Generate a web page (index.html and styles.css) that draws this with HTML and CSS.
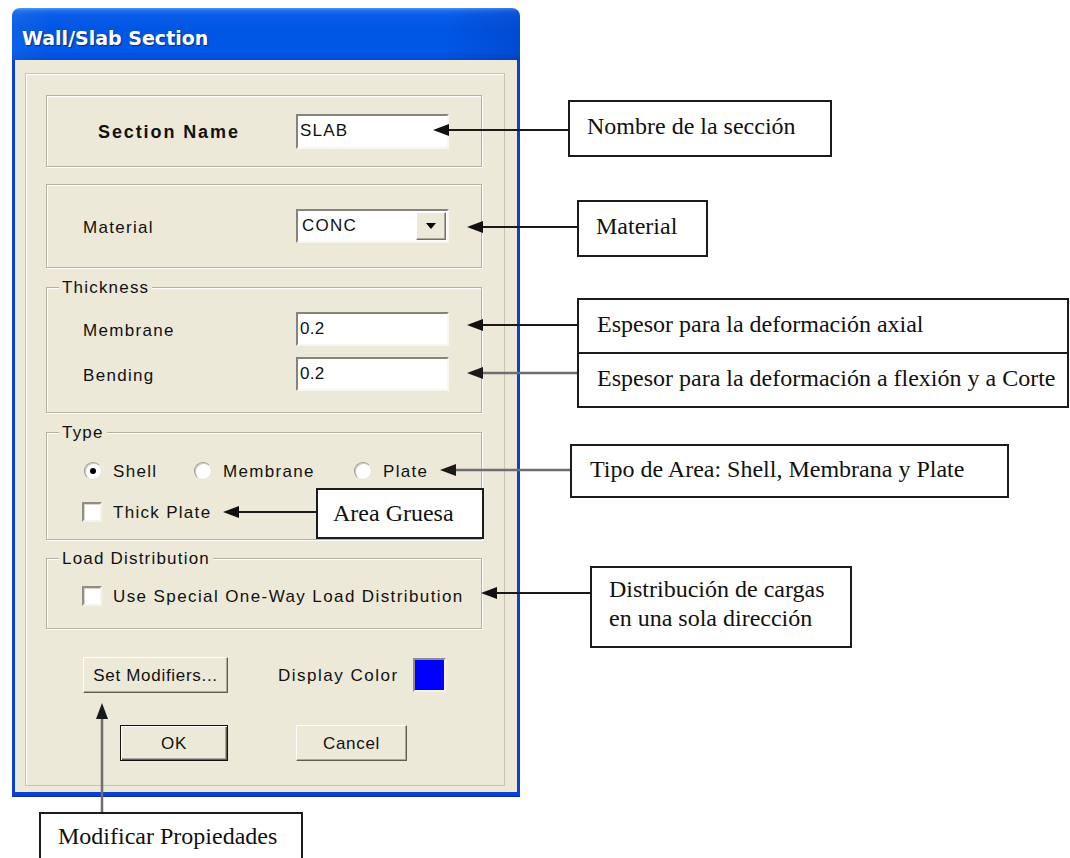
FILE: index.html
```html
<!DOCTYPE html>
<html lang="es">
<head>
<meta charset="utf-8">
<title>Wall/Slab Section</title>
<link rel="stylesheet" href="styles.css">
</head>
<body>
<div class="page">
  <div class="window">
    <div class="titlebar"><span class="title">Wall/Slab Section</span></div>
    <div class="frame">
      <div class="client">
        <div class="panel">
          <div class="group g-name">
            <div class="row row-name">
              <span class="label label-bold">Section Name</span>
              <div class="field"><span class="value">SLAB</span></div>
            </div>
          </div>

          <div class="group g-material">
            <div class="row">
              <span class="label">Material</span>
              <div class="field combo">
                <span class="value">CONC</span>
                <span class="drop">
                  <svg width="12" height="7" viewBox="0 0 12 7"><polygon points="1,0 11,0 6,6" fill="#000"/></svg>
                </span>
              </div>
            </div>
          </div>

          <div class="group g-thick">
            <div class="legend">Thickness</div>
            <div class="rows">
              <div class="row">
                <span class="label">Membrane</span>
                <div class="field field-num"><span class="value num">0.2</span></div>
              </div>
              <div class="row">
                <span class="label">Bending</span>
                <div class="field field-num"><span class="value num">0.2</span></div>
              </div>
            </div>
          </div>

          <div class="group g-type">
            <div class="legend">Type</div>
            <div class="radios">
              <div class="opt opt-shell"><span class="radio on"></span><span class="text">Shell</span></div>
              <div class="opt opt-membrane"><span class="radio"></span><span class="text">Membrane</span></div>
              <div class="opt"><span class="radio"></span><span class="text">Plate</span></div>
            </div>
            <div class="check check-type"><span class="box"></span><span class="text">Thick Plate</span></div>
          </div>

          <div class="group g-load">
            <div class="legend">Load Distribution</div>
            <div class="check check-load"><span class="box"></span><span class="text">Use Special One-Way Load Distribution</span></div>
          </div>

          <div class="actions">
            <button class="btn btn-mod">Set Modifiers...</button>
            <span class="dc-label">Display Color</span>
            <span class="swatch"></span>
          </div>

          <div class="buttons">
            <button class="btn btn-ok">OK</button>
            <button class="btn btn-cancel">Cancel</button>
          </div>
        </div>
      </div>
    </div>
  </div>

  <div class="notes">
    <svg class="arrows" width="1070" height="858" viewBox="0 0 1070 858">
      <g class="ink">
        <line x1="568" y1="130" x2="446" y2="130"/>
        <polygon points="433,130 449,124 449,136"/>
        <line x1="577" y1="227" x2="480" y2="227"/>
        <polygon points="467,227 483,221 483,233"/>
        <line x1="577" y1="325" x2="480" y2="325"/>
        <polygon points="467,325 483,319 483,331"/>
        <line x1="316" y1="512" x2="236" y2="512"/>
        <polygon points="223,512 239,506 239,518"/>
        <line x1="590" y1="593" x2="494" y2="593"/>
        <polygon points="481,593 497,587 497,599"/>
      </g>
      <g class="ink soft">
        <line x1="577" y1="373" x2="480" y2="373"/>
        <polygon points="467,373 483,367 483,379"/>
        <line x1="570" y1="470" x2="453" y2="470"/>
        <polygon points="440,470 456,464 456,476"/>
        <line x1="102" y1="812" x2="102" y2="716"/>
        <polygon points="102,703 96,719 108,719"/>
      </g>
    </svg>
    <div class="note n-name">Nombre de la sección</div>
    <div class="note n-material">Material</div>
    <div class="note n-axial">Espesor para la deformación axial</div>
    <div class="note n-flex">Espesor para la deformación a flexión y a Corte</div>
    <div class="note n-tipo">Tipo de Area: Shell, Membrana y Plate</div>
    <div class="note n-gruesa">Area Gruesa</div>
    <div class="note n-dist">Distribución de cargas<br>en una sola dirección</div>
    <div class="note n-mod">Modificar Propiedades</div>
  </div>
</div>
</body>
</html>
```

FILE: styles.css
```css
* { box-sizing: border-box; }

html, body {
  margin: 0;
  padding: 0;
  background: #fff;
}

body {
  font-family: "Liberation Sans", Arial, sans-serif;
  color: #111;
}

.page {
  position: relative;
  width: 1070px;
  height: 858px;
  overflow: hidden;
  padding-top: 8px;
}

/* ---------- window chrome ---------- */
.window {
  margin-left: 12px;
  width: 508px;
}

.titlebar {
  height: 52px;
  border-radius: 8px 8px 0 0;
  padding: 8px 0 0 10px;
  background:
    linear-gradient(to right, rgba(255,255,255,0.06) 0, rgba(255,255,255,0) 8%, rgba(255,255,255,0) 85%, rgba(0,20,120,0.18) 100%),
    linear-gradient(to bottom, #4a94f5 0, #1a6cf0 3px, #0a5ce8 7px, #0056e4 40%, #0058e8 80%, #0150dd 94%, #0a47c9 100%);
}

.title {
  display: block;
  font-family: "DejaVu Sans", Verdana, sans-serif;
  font-weight: 700;
  font-size: 19px;
  line-height: 44px;
  color: #fff;
  text-shadow: 1px 1px 1px #0b2a8a;
}

.frame {
  border-style: solid;
  border-color: #0a3fd8;
  border-width: 0 3px 4px 3px;
  box-shadow: 0 1px 0 #0a2aa0;
}

.client {
  background: #ece9d8;
  height: 732px;
  padding: 13px 12px 6px 10px;
}

.panel {
  height: 713px;
  border: 1px solid #c6c3b4;
  box-shadow: inset 1px 1px 0 #fff;
  padding: 21px 0 0 20px;
}

/* ---------- group boxes ---------- */
.group {
  width: 436px;
  border: 1px solid #b5b2a3;
  box-shadow: inset 1px 1px 0 #fff, 1px 1px 0 #fff;
}

.g-name {
  height: 72px;
  display: flex;
  align-items: center;
}

.g-material {
  margin-top: 17px;
  height: 84px;
  display: flex;
  align-items: center;
}

.g-thick {
  margin-top: 19px;
  height: 126px;
}

.g-type {
  margin-top: 19px;
  height: 108px;
}

.g-load {
  margin-top: 18px;
  height: 71px;
}

.legend {
  width: fit-content;
  height: 20px;
  margin: -11px 0 0 12px;
  padding: 1px 3px 0;
  background: #ece9d8;
  font-size: 17px;
  line-height: 20px;
  letter-spacing: 1.2px;
}

/* ---------- label + field rows ---------- */
.row {
  display: flex;
  align-items: center;
  padding-left: 36px;
}

.row-name {
  padding-left: 51px;
}

.label {
  width: 213px;
  padding-top: 4px;
  font-size: 17px;
  letter-spacing: 1.3px;
}

.label-bold {
  width: 198px;
  padding-top: 2px;
  font-weight: 700;
  font-size: 18px;
  letter-spacing: 1.9px;
}

.rows {
  padding-top: 15px;
  display: flex;
  flex-direction: column;
  gap: 11px;
}

.field {
  width: 153px;
  height: 35px;
  background: #fff;
  border: 2px solid;
  border-color: #86847a #f7f6f1 #f7f6f1 #86847a;
  display: flex;
  align-items: center;
  padding-left: 2px;
}

.field-num {
  height: 34px;
}

.value {
  font-size: 17px;
  letter-spacing: 1.2px;
}

.value.num {
  letter-spacing: 0.3px;
}

.combo {
  height: 34px;
  padding-left: 4px;
  justify-content: space-between;
  padding-right: 1px;
}

.drop {
  width: 30px;
  height: 28px;
  background: #ece9d8;
  border: 1px solid;
  border-color: #fff #716f64 #716f64 #fff;
  box-shadow: inset -1px -1px 0 #aca899;
  display: flex;
  align-items: center;
  justify-content: center;
}

/* ---------- radios and checks ---------- */
.radios {
  display: flex;
  align-items: center;
  height: 20px;
  margin-top: 19px;
  padding-left: 37px;
}

.opt {
  display: flex;
  align-items: center;
  gap: 11px;
}

.opt-shell { width: 110px; }
.opt-membrane { width: 160px; }

.radio {
  width: 18px;
  height: 18px;
  border-radius: 50%;
  background: #fff;
  border: 1px solid;
  border-color: #9a988d #e4e2d8 #e4e2d8 #9a988d;
  box-shadow: inset 1px 1px 0 #cfcdc2;
  display: flex;
  align-items: center;
  justify-content: center;
}

.radio.on::after {
  content: "";
  width: 6px;
  height: 6px;
  border-radius: 50%;
  background: #000;
}

.text {
  padding-top: 2px;
  font-size: 17px;
  letter-spacing: 1.3px;
}

.check {
  display: flex;
  align-items: center;
  gap: 11px;
  height: 20px;
  padding-left: 35px;
}

.check-type { margin-top: 21px; }
.check-load { margin-top: 18px; }

.check-load .text { letter-spacing: 1.4px; }

.box {
  width: 20px;
  height: 20px;
  background: #fff;
  border: 2px solid;
  border-color: #8f8d84 #f4f3ee #f4f3ee #8f8d84;
  box-shadow: inset 1px 1px 0 #d8d6cb;
}

/* ---------- bottom controls ---------- */
.actions {
  margin-top: 28px;
  height: 36px;
  display: flex;
  align-items: center;
  padding-left: 37px;
}

.btn {
  height: 36px;
  background: #ece9d8;
  border: 1px solid;
  border-color: #fff #5f5d54 #5f5d54 #fff;
  box-shadow: inset -1px -1px 0 #aca899;
  font-family: "Liberation Sans", Arial, sans-serif;
  font-size: 17px;
  letter-spacing: 0.7px;
  color: #111;
  padding: 2px 0 0;
}

.btn-mod { width: 145px; }

.dc-label {
  margin-left: 50px;
  width: 135px;
  padding-top: 2px;
  font-size: 17px;
  letter-spacing: 1.5px;
}

.swatch {
  width: 33px;
  height: 34px;
  background: #0000ff;
  border: 2px solid;
  border-color: #8f8d84 #f4f3ee #f4f3ee #8f8d84;
}

.buttons {
  margin-top: 32px;
  display: flex;
  gap: 68px;
  padding-left: 74px;
}

.btn-ok {
  width: 108px;
  border: 1px solid #111;
  box-shadow: inset 1px 1px 0 #fff, inset -1px -1px 0 #5f5d54, inset -2px -2px 0 #aca899;
}

.btn-cancel { width: 111px; }

/* ---------- callouts ---------- */
.notes {
  position: absolute;
  inset: 0;
  pointer-events: none;
}

.arrows {
  position: absolute;
  left: 0;
  top: 0;
}

.ink line {
  stroke: #1a1a1a;
  stroke-width: 2;
}

.ink polygon {
  fill: #111;
}

.ink.soft line {
  stroke: #6e6e6e;
  stroke-width: 2.5;
}

.ink.soft polygon {
  fill: #1a1a1a;
}

.note {
  position: absolute;
  background: #fff;
  border: 2px solid #1c1c1c;
  font-family: "Liberation Serif", "Times New Roman", serif;
  font-size: 24px;
  line-height: 29px;
  color: #111;
  display: flex;
  align-items: center;
  padding: 0 0 3px 17px;
  white-space: nowrap;
}

.n-name { left: 568px; top: 100px; width: 264px; height: 57px; padding-bottom: 5px; }
.n-material { left: 577px; top: 200px; width: 131px; height: 57px; padding-bottom: 5px; }
.n-axial { left: 577px; top: 298px; width: 492px; height: 56px; padding-left: 18px; }
.n-flex { left: 577px; top: 352px; width: 492px; height: 56px; padding-left: 18px; }
.n-tipo { left: 570px; top: 444px; width: 439px; height: 54px; padding-left: 18px; }
.n-gruesa { left: 316px; top: 488px; width: 168px; height: 51px; padding-left: 15px; padding-top: 2px; }
.n-dist { left: 590px; top: 566px; width: 262px; height: 82px; padding-bottom: 6px; }
.n-mod { left: 39px; top: 812px; width: 264px; height: 60px; align-items: flex-start; padding-top: 8px; }
```
